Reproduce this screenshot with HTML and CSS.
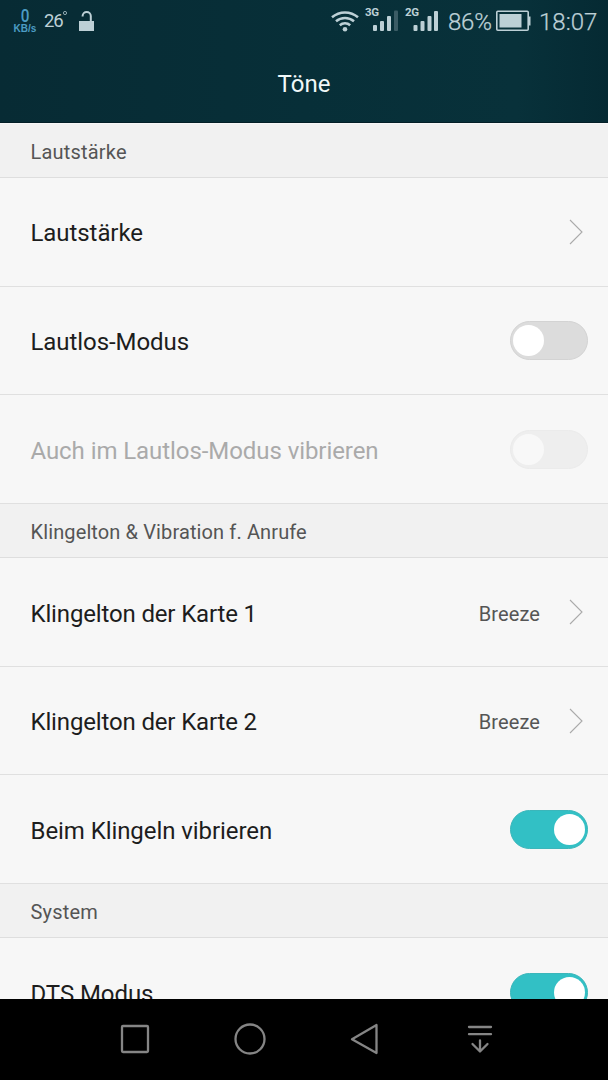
FILE: index.html
```html
<!DOCTYPE html>
<html lang="de">
<head>
<meta charset="utf-8">
<title>Töne</title>
<link rel="stylesheet" href="styles.css">
</head>
<body>
<div class="screen">
  <header class="header">
    <div class="status">
      <div class="speed"><span class="speed-value">0</span><span class="speed-unit">KB/s</span></div>
      <div class="temp">26</div>
      <svg class="degree" width="6" height="42" viewBox="0 0 6 42"><circle cx="3" cy="13" r="1.6"/></svg>
      <svg class="lock" width="15" height="42" viewBox="0 0 15 42"><path class="shackle" d="M3.6 16.5v-.5a4.1 4.1 0 0 1 8.200 0V22"/><path class="solid" d="M0 21h15V31H0z"/></svg>
      <div class="spacer"></div>
      <svg class="wifi" width="28" height="42" viewBox="0 0 28 42"><path d="M1 17.3c7.5-6.5 18.500-6.500 26 0M5 21.300c5.200-4.500 12.800-4.500 18 0M8.800 25.300c3-2.600 7.400-2.600 10.400 0"/><circle class="solid" cx="14" cy="29.200" r="2.300"/></svg>
      <div class="signal"><span class="network">3G</span>
        <svg width="25" height="42" viewBox="0 0 25 42"><rect x="0" y="25" width="4" height="6" rx="1"/><rect x="7" y="21" width="4" height="10" rx="1"/><rect x="14" y="16" width="4" height="15" rx="1"/><rect class="dim" x="21" y="10.500" width="4" height="20.500" rx="1"/></svg>
      </div>
      <div class="signal"><span class="network">2G</span>
        <svg width="25" height="42" viewBox="0 0 25 42"><rect x="0.500" y="25" width="4" height="6" rx="1"/><rect x="7.500" y="21" width="4" height="10" rx="1"/><rect x="14.500" y="16" width="4" height="15" rx="1"/><rect x="21" y="11" width="4" height="20" rx="1"/></svg>
      </div>
      <div class="percent">86%</div>
      <svg class="battery" width="35" height="42" viewBox="0 0 35 42"><rect class="case" x="0.800" y="11.300" width="31.400" height="19" rx="1"/><path class="solid" d="M3.500 14h22v13.500h-22zM32.500 16.500h2v9h-2z"/></svg>
      <div class="clock">18:07</div>
    </div>
    <h1 class="title">Töne</h1>
  </header>
  <main class="list">
    <h2 class="section">Lautstärke</h2>
    <div class="row"><span class="label">Lautstärke</span><svg class="chevron" width="14" height="26" viewBox="0 0 14 26"><path d="M1 1l12 12L1 25"/></svg></div>
    <div class="row"><span class="label">Lautlos-Modus</span><span class="switch"></span></div>
    <div class="row disabled"><span class="label">Auch im Lautlos-Modus vibrieren</span><span class="switch"></span></div>
    <h2 class="section calls">Klingelton &amp; Vibration f. Anrufe</h2>
    <div class="row"><span class="label ringtone">Klingelton der Karte 1</span><span class="value">Breeze</span><svg class="chevron" width="14" height="26" viewBox="0 0 14 26"><path d="M1 1l12 12L1 25"/></svg></div>
    <div class="row"><span class="label ringtone">Klingelton der Karte 2</span><span class="value">Breeze</span><svg class="chevron" width="14" height="26" viewBox="0 0 14 26"><path d="M1 1l12 12L1 25"/></svg></div>
    <div class="row"><span class="label">Beim Klingeln vibrieren</span><span class="switch on"></span></div>
    <h2 class="section">System</h2>
    <div class="row"><span class="label">DTS Modus</span><span class="switch on"></span></div>
  </main>
  <nav class="nav">
    <svg width="34" height="34" viewBox="0 0 34 34"><rect x="4" y="4" width="26" height="26" rx="1"/></svg>
    <svg width="34" height="34" viewBox="0 0 34 34"><circle cx="17" cy="17" r="14.500"/></svg>
    <svg width="34" height="34" viewBox="0 0 34 34"><path d="M4 17.200L28.500 3v28z"/></svg>
    <svg width="34" height="34" viewBox="0 0 34 34"><path d="M6 5h22M6 12.200h22M17 18.500v11M9.500 22l7.500 7.500 7.500-7.500"/></svg>
  </nav>
</div>
</body>
</html>
```
FILE: styles.css
```css
* { box-sizing: border-box; }
body { margin: 0; background: #000; font-family: Roboto, "Noto Sans", sans-serif; }
.screen { width: 608px; height: 1080px; display: flex; flex-direction: column; overflow: hidden; }
svg { display: block; flex: none; }

.header { height: 123px; flex: none; background: linear-gradient(90deg, #072b34, #072f38 50%, #08313a 85%, #052a33); border-bottom: 1px solid #041f27; }
.status { height: 42px; display: flex; padding: 0 11px 0 13px; color: #bdd0d6; line-height: 42px; white-space: nowrap; }
.spacer { flex: 1; }
.solid { fill: #bdd0d6; stroke: none; }
.speed { width: 24px; display: flex; flex-direction: column; align-items: center; color: #4c9cc4; padding-top: 7px; }
.speed-value { font-size: 18px; line-height: 18px; font-weight: 500; transform: scaleX(0.85); }
.speed-unit { font: bold 10px/8px "Liberation Sans", sans-serif; }
.temp { width: 19px; margin-left: 7px; font-size: 18.5px; letter-spacing: -1.2px; }
.degree { margin-left: -1px; fill: none; stroke: #9fb5bc; stroke-width: 0.9; }
.lock { margin-left: 11px; }
.shackle { fill: none; stroke: #bdd0d6; stroke-width: 2; }
.wifi { fill: none; stroke: #bdd0d6; stroke-width: 2.5; }
.signal { display: flex; fill: #bdd0d6; margin-left: 6px; }
.signal + .signal { margin-left: 7px; }
.network { width: 8px; font-size: 11.5px; line-height: 24px; font-weight: 700; letter-spacing: -0.3px; }
.dim { fill: #3b5c65; }
.percent { width: 48px; margin-left: 10px; font-size: 24px; line-height: 44px; font-weight: 300; letter-spacing: -0.2px; -webkit-text-stroke: 0.25px #bdd0d6; }
.case { fill: none; stroke: #bdd0d6; stroke-width: 1.6; }
.clock { width: 58px; margin-left: 8px; font-size: 24px; line-height: 44px; font-weight: 300; -webkit-text-stroke: 0.25px #bdd0d6; }
.title { margin: 0; padding-top: 2px; text-align: center; color: #f0f8f8; font-size: 24px; line-height: 81px; font-weight: 400; }

.list { flex: 1; min-height: 0; padding-top: 0.9px; overflow: hidden; background: #f7f7f7; }
.section { margin: 0; height: 54.3px; padding: 2px 31px 0 30.5px; border-bottom: 1px solid #dedede; background: #f1f1f1; color: #555; font-size: 20px; line-height: 53px; font-weight: 400; letter-spacing: 0.2px; }
.calls { letter-spacing: 0.12px; }
.row { height: 108.6px; padding: 0 20px 0 30.5px; border-bottom: 1px solid #e0e0e0; display: flex; align-items: center; color: #1d1d1d; }
.label { flex: 1; font-size: 24px; line-height: 30px; padding-top: 3px; letter-spacing: -0.07px; }
.ringtone { letter-spacing: -0.15px; }
.value { padding-top: 3px; margin-right: 29px; color: #555; font-size: 20px; letter-spacing: 0.1px; }
.chevron { margin-right: 5px; fill: none; stroke: #aaa; stroke-width: 1.1; }
.switch { width: 78px; height: 39px; padding: 4px 2px; border-radius: 20px; display: flex; background: #dcdcdc; border: 1px solid #d3d3d3; }
.switch::before { content: ""; width: 31px; height: 31px; margin-top: -1px; border-radius: 50%; background: #fff; }
.switch.on { background: #32c0c5; border-color: #3bb6ba; justify-content: flex-end; }
.disabled { color: #aaa; }
.disabled .switch { background: #eee; border-color: #ebebeb; }
.disabled .switch::before { background: #f8f8f8; }

.nav { height: 81px; flex: none; padding: 0 111px 1px 118px; display: flex; justify-content: space-between; align-items: center; background: #000; }
.nav svg { fill: none; stroke: #858585; stroke-width: 2.3; stroke-linejoin: round; stroke-linecap: round; }
```
